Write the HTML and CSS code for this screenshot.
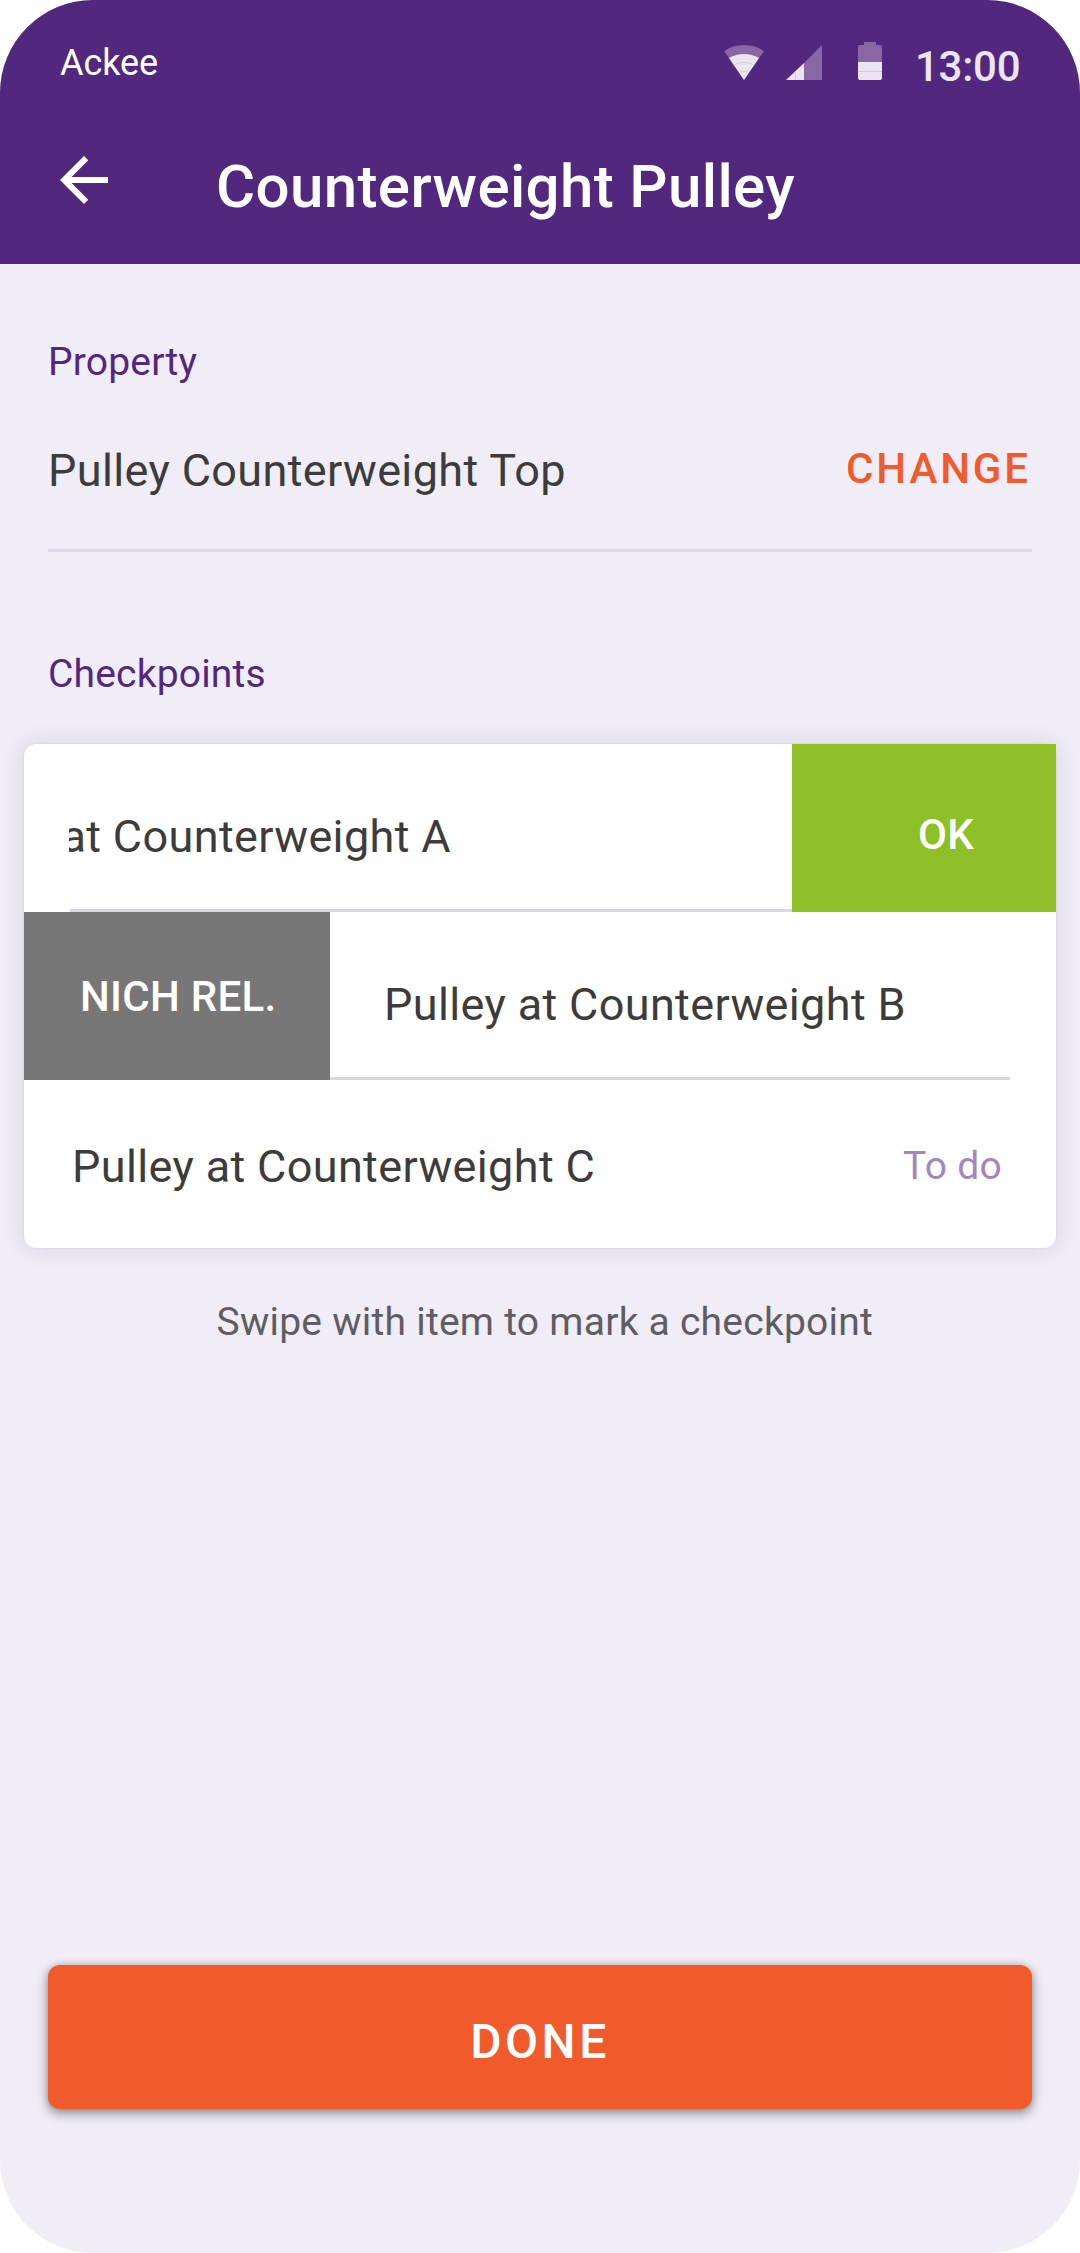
FILE: index.html
```html
<!DOCTYPE html>
<html lang="en">
<head>
    <meta charset="UTF-8">
    <title>Counterweight Pulley</title>
    <link rel="stylesheet" href="styles.css">
</head>
<body>
    <div class="screen">
        <header class="header">
            <div class="status-bar">
                <span class="carrier">Ackee</span>
                <svg class="wifi" width="40" height="35" viewBox="0 0 40 35">
                    <path class="dim" d="M0 6 Q9 0 20 0 T40 6 L20 35z"/>
                    <path class="lit" d="M5 13 Q12 9 20 9 T35 13 L20 35z"/>
                    <path class="seam" d="M11 19.5 Q20 15.5 29 19.5 M16.5 27 Q20 25.5 23.5 27"/>
                </svg>
                <svg class="signal" width="36" height="35" viewBox="0 0 36 35">
                    <path class="dim" d="M18 18 L36 0 V35 H18z"/>
                    <path class="lit" d="M0 35 L18 18 V35z"/>
                    <path class="seam" d="M9.5 27 V35"/>
                </svg>
                <svg class="battery" width="24" height="38" viewBox="0 0 24 38">
                    <path class="dim" d="M6 0 H18 V3 H22 Q24 3 24 5 V20 H0 V5 Q0 3 2 3 H6z"/>
                    <path class="lit" d="M0 20 H24 V36 Q24 38 22 38 H2 Q0 38 0 36z"/>
                    <path class="seam" d="M0 29.5 H24"/>
                </svg>
                <span class="clock">13:00</span>
            </div>
            <div class="toolbar">
                <svg class="back" width="48" height="48" viewBox="4 4 16 16">
                    <path d="M20 11H7.83l5.59-5.59L12 4l-8 8 8 8 1.41-1.41L7.83 13H20z"/>
                </svg>
                <h1>Counterweight Pulley</h1>
            </div>
        </header>

        <main>
            <section class="property">
                <h2>Property</h2>
                <div class="property-row">
                    <span class="item-name">Pulley Counterweight Top</span>
                    <button class="change">CHANGE</button>
                </div>
            </section>

            <section class="checkpoints">
                <h2>Checkpoints</h2>
                <div class="card">
                    <!-- swiped to the left -->
                    <div class="row row-ok">
                        <div class="row-body">
                            <div class="clip"><span class="item-name">at Counterweight A</span></div>
                        </div>
                        <div class="action ok">OK</div>
                    </div>
                    <!-- swiped to the right -->
                    <div class="row row-skip">
                        <div class="action skip">NICH REL.</div>
                        <div class="row-body">
                            <span class="item-name">Pulley at Counterweight B</span>
                        </div>
                    </div>
                    <div class="row row-todo">
                        <span class="item-name">Pulley at Counterweight C</span>
                        <span class="todo">To do</span>
                    </div>
                </div>
                <p class="hint">Swipe with item to mark a checkpoint</p>
            </section>
        </main>

        <button class="done">DONE</button>
    </div>
</body>
</html>
```
FILE: styles.css
```css
* {
    box-sizing: border-box;
}

body {
    margin: 0;
    background: #fff;
    font-family: Roboto, "Liberation Sans", sans-serif;
}

h1, h2, p {
    margin: 0;
}

button {
    padding: 0;
    border: none;
    background: none;
    font-family: inherit;
    cursor: pointer;
}

.screen {
    display: flex;
    flex-direction: column;
    width: 1080px;
    height: 2253px;
    padding-bottom: 144px;
    background: #f0edf7;
    border-radius: 93px;
    overflow: hidden;
}

.header {
    height: 264px;
    background: #52277e;
    color: #fff;
}

.status-bar {
    display: flex;
    align-items: flex-start;
    height: 126px;
    padding: 0 60px;
}

.carrier {
    flex: 1;
    font-size: 36px;
    line-height: 126px;
    letter-spacing: -0.1px;
}

.wifi {
    margin: 45px 22px 0 0;
}

.signal {
    margin: 45px 36px 0 0;
}

.battery {
    margin: 42px 33px 0 0;
}

.clock {
    width: 105px;
    font-size: 42px;
    font-weight: 500;
    line-height: 133px;
    letter-spacing: -0.25px;
    color: #ebe5f1;
}

.dim {
    fill: #8967a5;
}

.lit {
    fill: #ebe5f1;
}

.seam {
    fill: none;
    stroke: #d3c8de;
    stroke-width: 1;
}

.toolbar {
    display: flex;
    align-items: flex-start;
    padding-left: 60px;
}

.back {
    margin: 30px 108px 0 0;
    fill: #fff;
}

h1 {
    font-size: 60px;
    font-weight: 500;
    line-height: 121px;
    letter-spacing: 0.38px;
}

main {
    flex: 1;
}

h2 {
    padding-left: 48px;
    font-size: 39px;
    font-weight: 400;
    line-height: 46px;
    letter-spacing: 0.18px;
    color: #52277e;
}

.item-name {
    font-size: 45px;
    line-height: 53px;
    letter-spacing: 0.36px;
    color: #3c3c3c;
    white-space: nowrap;
}

.property {
    padding-top: 75px;
}

.property-row {
    display: flex;
    justify-content: space-between;
    align-items: flex-start;
    height: 108px;
    margin: 59px 48px 0;
    border-bottom: 3px solid #e0d7ea;
}

.change {
    margin-right: 1px;
    font-size: 42px;
    font-weight: 500;
    line-height: 49px;
    letter-spacing: 2.9px;
    color: #f15a2b;
}

.checkpoints {
    padding-top: 99px;
}

.card {
    margin: 47px 24px 0;
    background: #fff;
    border-radius: 12px;
    box-shadow: 0 0 3px rgba(0, 0, 0, 0.08), 0 0 24px rgba(40, 20, 80, 0.13);
}

.row {
    display: flex;
    height: 168px;
}

.row-body {
    flex: 1;
    padding-top: 66px;
    border-bottom: 3px solid #ddd6e9;
}

.row-ok .row-body {
    margin-left: 46px;
}

/* the name slides out under the left edge */
.clip {
    display: flex;
    justify-content: flex-end;
    width: 382px;
    margin-left: -1px;
    overflow: hidden;
}

.row-skip {
    padding-right: 46px;
}

.row-skip .row-body {
    padding-left: 54px;
}

.action {
    font-size: 42px;
    font-weight: 500;
    line-height: 49px;
    letter-spacing: 0.3px;
    color: #fff;
}

.ok {
    width: 264px;
    padding: 66px 0 0 126px;
    background: #8dc026;
}

.skip {
    width: 306px;
    padding: 60px 0 0 56px;
    background: #777;
}

.row-todo {
    justify-content: space-between;
    padding: 60px 54px 0 48px;
}

.todo {
    padding-top: 3px;
    font-size: 39px;
    line-height: 46px;
    letter-spacing: 0.3px;
    color: #a286c0;
}

.hint {
    padding: 51px 0 0 216.5px;
    font-size: 39px;
    line-height: 46px;
    letter-spacing: 0.25px;
    color: #5f5d63;
}

.done {
    height: 144px;
    margin: 0 48px;
    padding-top: 9px;
    background: #f15a2b;
    border-radius: 12px;
    box-shadow: 0 0 6px rgba(0, 0, 0, 0.12), 0 4px 12px rgba(0, 0, 0, 0.42);
    font-size: 48px;
    font-weight: 500;
    letter-spacing: 3.5px;
    color: #fff;
}
```
